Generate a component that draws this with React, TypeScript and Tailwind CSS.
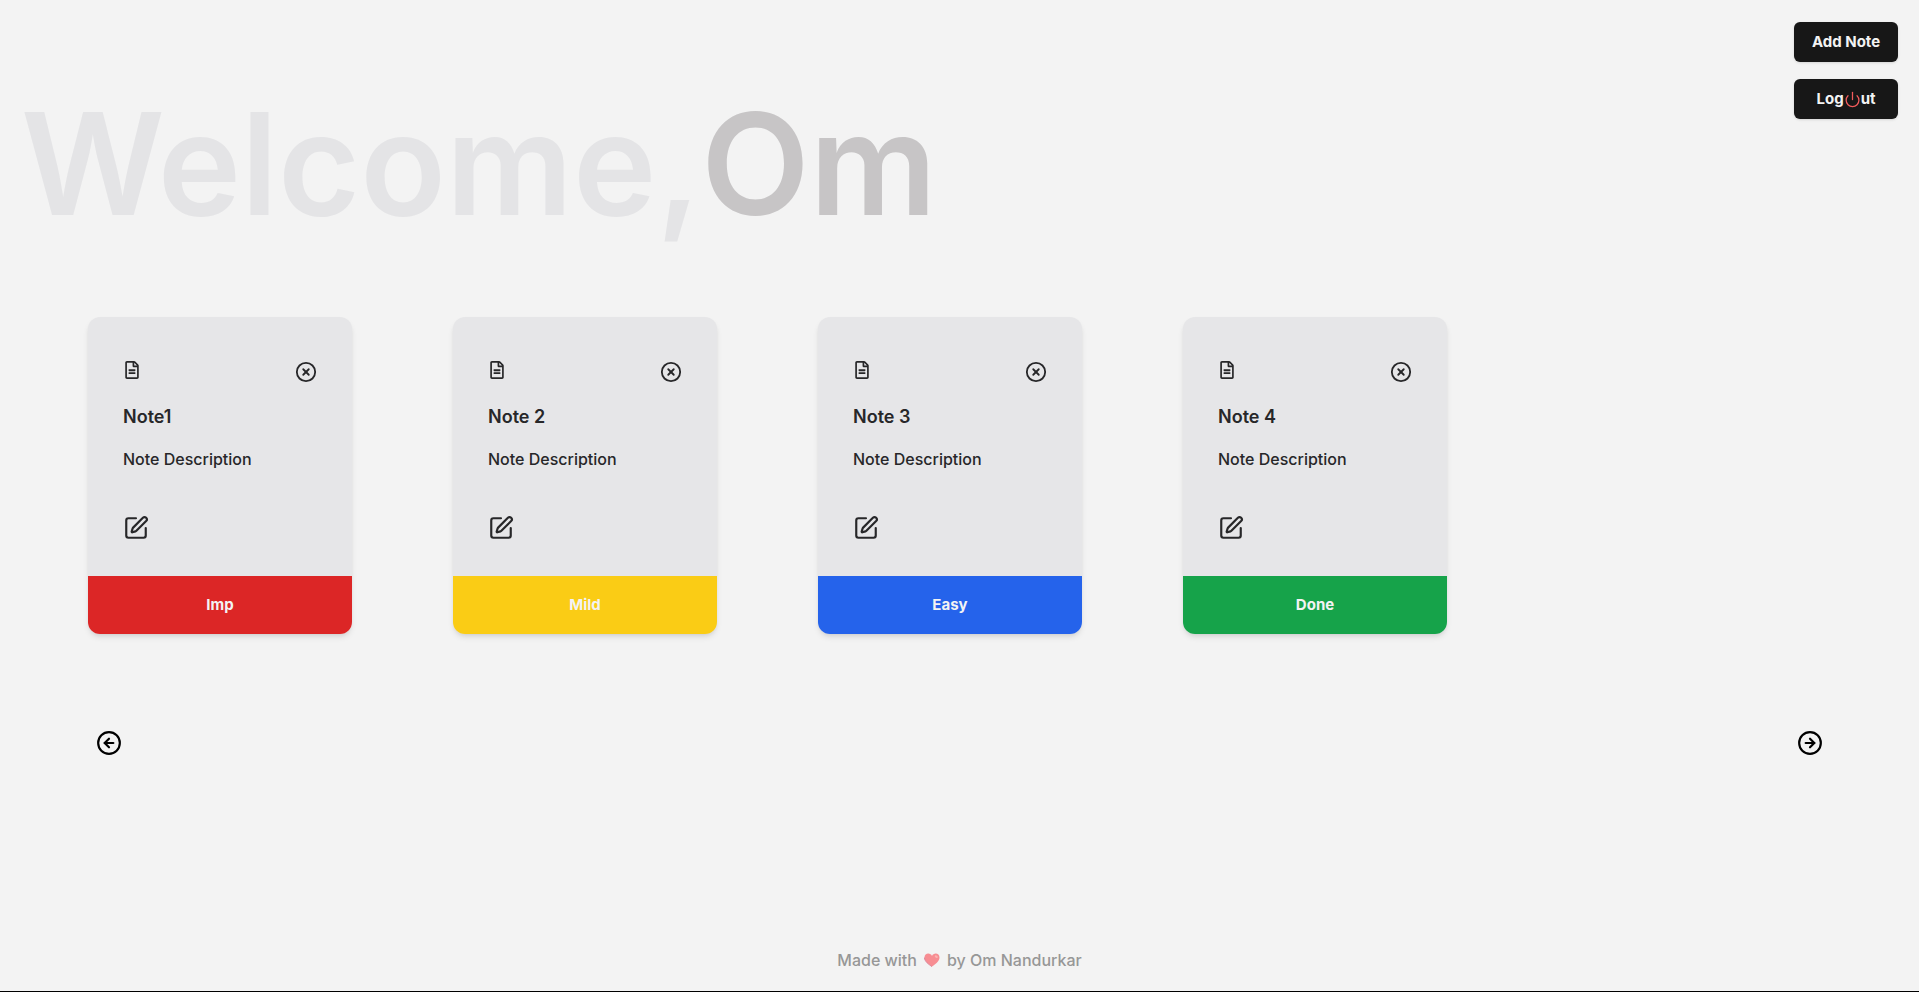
import { FaRegFileAlt } from "react-icons/fa";
import { LuSquarePen, LuCircleX, LuCircleArrowLeft, LuCircleArrowRight, LuPower } from "react-icons/lu";

type Note = { title: string; description: string; tag: string; tagClass: string };

const notes: Note[] = [
  { title: "Note1", description: "Note Description", tag: "Imp", tagClass: "bg-[#dc2626]" },
  { title: "Note 2", description: "Note Description", tag: "Mild", tagClass: "bg-[#facc15]" },
  { title: "Note 3", description: "Note Description", tag: "Easy", tagClass: "bg-[#2563eb]" },
  { title: "Note 4", description: "Note Description", tag: "Done", tagClass: "bg-[#16a34a]" },
];

function NoteCard({ title, description, tag, tagClass }: Note) {
  return (
    <article className="flex w-66 shrink-0 flex-col overflow-hidden rounded-xl bg-[#e6e6e8] text-[#272729] shadow-md">
      <div className="flex flex-col px-[35px] pt-11 pb-[35px]">
        <div className="flex items-start justify-between">
          <FaRegFileAlt size={18} />
          <button type="button" aria-label="Delete note">
            <LuCircleX size={22} />
          </button>
        </div>
        <h2 className="mt-5 text-lg leading-7 font-semibold">{title}</h2>
        <p className="mt-4 text-base leading-6 font-medium">{description}</p>
        <button type="button" aria-label="Edit note" className="mt-11 self-start">
          <LuSquarePen size={26} />
        </button>
      </div>
      <div className={`py-[17px] text-center text-[15px] leading-6 font-bold text-[#f3f3f3] ${tagClass}`}>{tag}</div>
    </article>
  );
}

export default function App() {
  return (
    <div className="flex min-h-screen flex-col border-b border-black bg-[#f3f3f3] font-['Inter',sans-serif]">
      <header className="flex items-start justify-between px-[21px]">
        <h1 className="mt-[79px] flex text-[141px] leading-[170px] font-semibold text-[#e4e4e6]">
          <span>Welcome,</span>
          <span className="text-[#c7c5c6]">Om</span>
        </h1>
        <nav className="flex w-26 flex-col gap-[17px] pt-[22px] text-[15px] font-bold text-[#f3f3f3]">
          <button type="button" className="h-10 rounded-md bg-[#171717] shadow-sm">Add Note</button>
          <button type="button" className="flex h-10 items-center justify-center rounded-md bg-[#171717] shadow-sm">
            Log
            <LuPower size={17} strokeWidth={1.8} className="text-[#f15b5b]" />
            ut
          </button>
        </nav>
      </header>

      <main className="mt-17 px-22">
        <div className="flex gap-[101px]">
          {notes.map((note) => (
            <NoteCard key={note.title} {...note} />
          ))}
        </div>
        <div className="mt-24 flex justify-between px-2">
          <button type="button" aria-label="Previous"><LuCircleArrowLeft size={26} /></button>
          <button type="button" aria-label="Next"><LuCircleArrowRight size={26} /></button>
        </div>
      </main>

      <footer className="mt-auto flex items-center justify-center gap-[7px] pb-[19px] text-base leading-6 font-medium text-[#979797]">
        <span>Made with</span>
        <svg viewBox="0 0 16 14" className="h-3.5 w-4" aria-hidden="true">
          <path d="M8 13.600C5 11.600.5 8.500.5 4.600.5 2.200 2.200.6 4.300.6 5.900.6 7.300 1.500 8 2.900 8.700 1.500 10.100.6 11.700.6 13.800.6 15.500 2.200 15.500 4.600 15.500 8.500 11 11.600 8 13.600Z" fill="#f78d92" />
          <path d="M.5 4.600C.5 8.500 5 11.600 8 13.600" fill="none" stroke="#dc8298" strokeWidth="1" />
          <ellipse cx="12.300" cy="3.600" rx="1.700" ry="1.100" transform="rotate(40 12.300 3.600)" fill="#fbb3b1" />
        </svg>
        <span>by Om Nandurkar</span>
      </footer>
    </div>
  );
}
